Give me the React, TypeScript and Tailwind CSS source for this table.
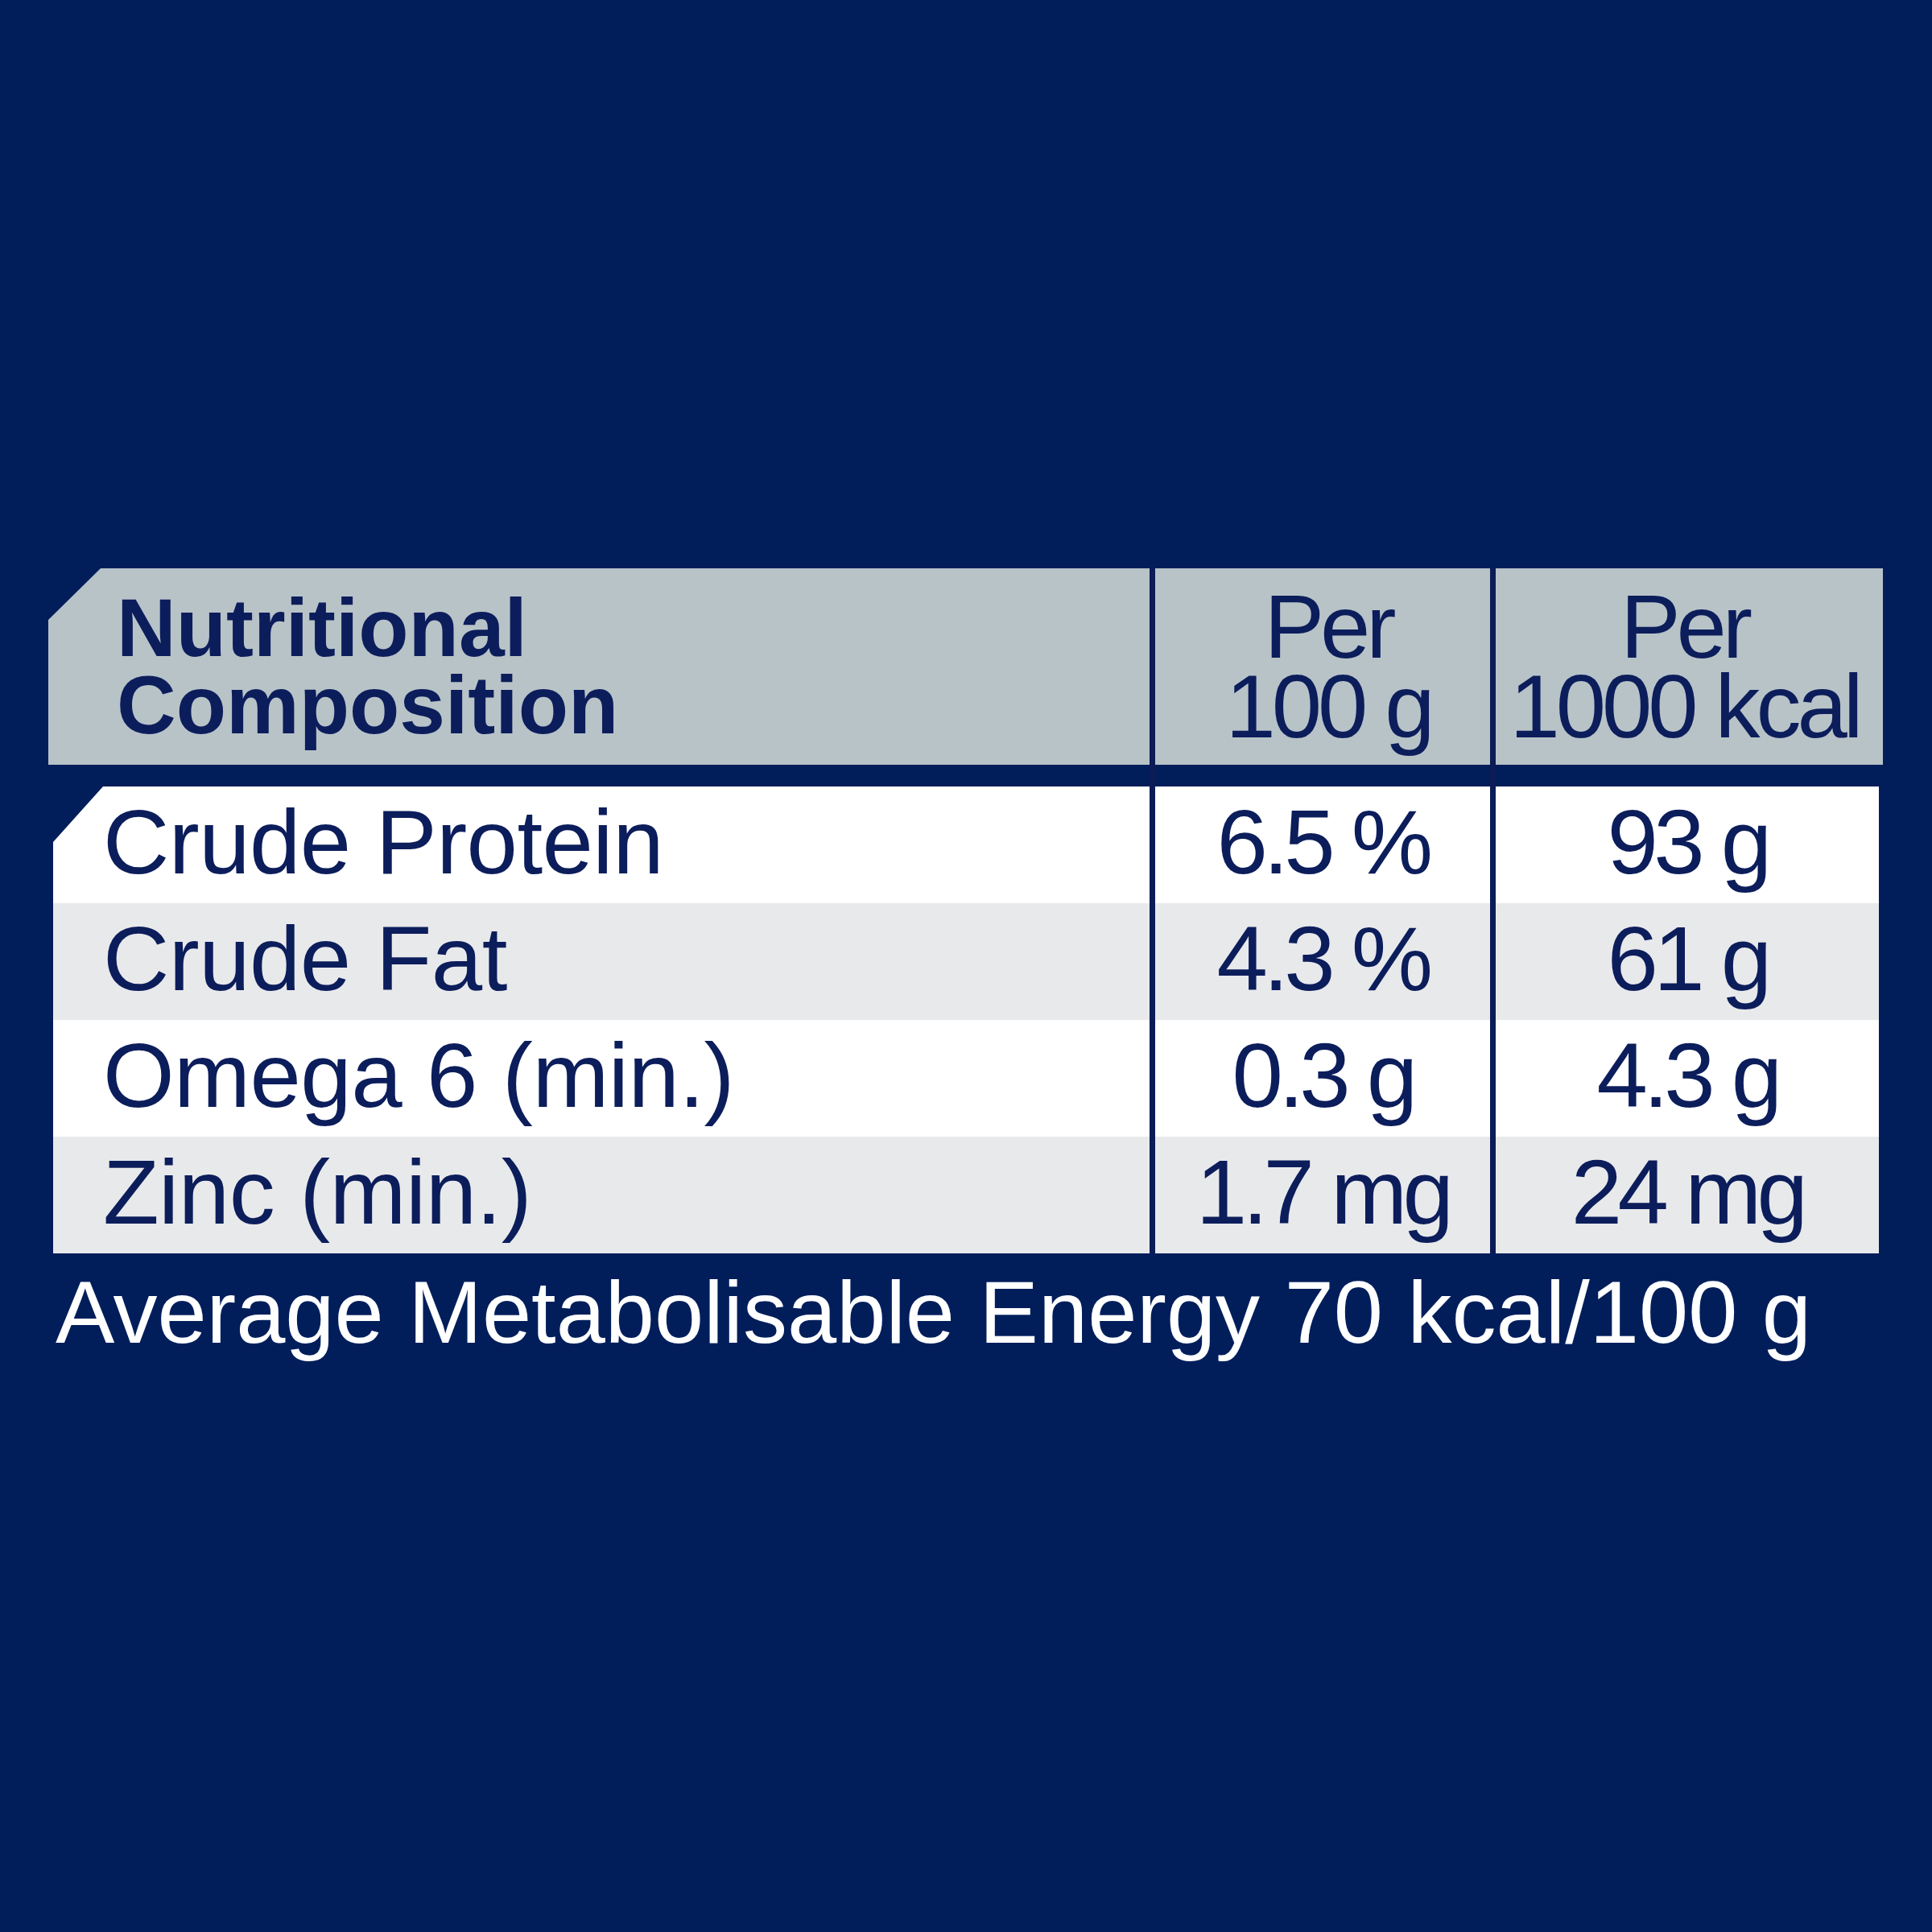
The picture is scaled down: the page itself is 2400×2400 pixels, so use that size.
const rows = [
  { label: "Crude Protein", per100: "6.5 %", per1000: "93 g", bg: "bg-white" },
  { label: "Crude Fat", per100: "4.3 %", per1000: "61 g", bg: "bg-[#e8e9eb]" },
  { label: "Omega 6 (min.)", per100: "0.3 g", per1000: "4.3 g", bg: "bg-white" },
  { label: "Zinc (min.)", per100: "1.7 mg", per1000: "24 mg", bg: "bg-[#e8e9eb]" },
];

function Divider() {
  return <div className="w-[7px] shrink-0 self-stretch bg-[#0b1c57]" />;
}

export default function App() {
  return (
    <div className="h-[2400px] w-[2400px] bg-[#011e5b] pl-[60px] pt-[706px] font-['Liberation_Sans',Arial,sans-serif] text-[#0c1d5b]">
      {/* header */}
      <div className="flex h-[244px]">
        <div className="flex w-[1368px] items-center bg-[#b8c3c8] pl-[85px] [clip-path:polygon(65px_0,100%_0,100%_100%,0_100%,0_64px)]">
          <h2 className="text-[102px] font-bold leading-[96px]">
            Nutritional
            <br />
            Composition
          </h2>
        </div>
        <Divider />
        <div className="flex w-[416px] items-center justify-center bg-[#b8c3c8] pl-[14px]">
          <div className="text-center text-[112px] leading-[99px] tracking-[-0.045em]">
            Per
            <br />
            100 g
          </div>
        </div>
        <Divider />
        <div className="flex w-[481px] items-center justify-center bg-[#b8c3c8] pr-[12px]">
          <div className="text-center text-[112px] leading-[99px] tracking-[-0.045em]">
            Per
            <br />
            1000 kcal
          </div>
        </div>
      </div>

      {/* gap between header and body */}
      <div className="flex h-[27px]">
        <div className="w-[1368px]" />
        <Divider />
        <div className="w-[416px]" />
        <Divider />
      </div>

      {/* body */}
      {rows.map((row, i) => (
        <div key={row.label} className="flex h-[145px]">
          <div
            className={`ml-[6px] flex w-[1362px] items-center pb-[7px] pl-[62px] text-[114px] leading-none tracking-[-0.005em] ${row.bg} ${
              i === 0 ? "[clip-path:polygon(62px_0,100%_0,100%_100%,0_100%,0_69px)]" : ""
            }`}
          >
            {row.label}
          </div>
          <Divider />
          <div
            className={`flex w-[416px] items-center justify-center pb-[7px] text-[114px] leading-none tracking-[-0.05em] ${row.bg}`}
          >
            {row.per100}
          </div>
          <Divider />
          <div
            className={`flex w-[476px] items-center justify-center pb-[7px] text-[114px] leading-none tracking-[-0.05em] ${row.bg}`}
          >
            {row.per1000}
          </div>
        </div>
      ))}

      <p className="mt-[18px] pl-[9px] text-[110px] leading-none text-white">
        Average Metabolisable Energy 70 kcal/100 g
      </p>
    </div>
  );
}
